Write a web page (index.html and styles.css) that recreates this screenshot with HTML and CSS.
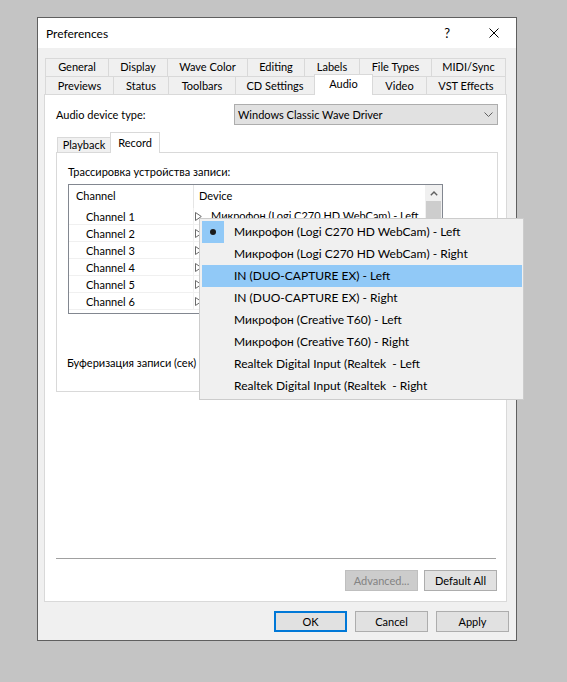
FILE: index.html
```html
<!DOCTYPE html>
<html>
<head>
<meta charset="utf-8">
<link rel="stylesheet" href="styles.css">
</head>
<body>
<div class="screen">
  <div class="dialog">
    <div class="titlebar">
      <span class="title">Preferences</span>
      <span class="help">?</span>
      <svg class="close" width="10" height="10" viewBox="0 0 10 10"><path d="M0.5 0.5 L9.5 9.5 M9.5 0.5 L0.5 9.5" stroke="#000" stroke-width="1" fill="none"/></svg>
    </div>
    <div class="body">
      <div class="tabs">
        <div class="tabrow top">
          <div class="tab w-general">General</div>
          <div class="tab w-display">Display</div>
          <div class="tab w-wave">Wave Color</div>
          <div class="tab w-editing">Editing</div>
          <div class="tab w-labels">Labels</div>
          <div class="tab w-filetypes">File Types</div>
          <div class="tab w-midi">MIDI/Sync</div>
        </div>
        <div class="tabrow">
          <div class="tab w-previews">Previews</div>
          <div class="tab w-status">Status</div>
          <div class="tab w-toolbars">Toolbars</div>
          <div class="tab w-cd">CD Settings</div>
          <div class="tab active w-audio">Audio</div>
          <div class="tab w-video">Video</div>
          <div class="tab w-vst">VST Effects</div>
        </div>
      </div>
      <div class="panel">
        <div class="device-row">
          <span class="device-label">Audio device type:</span>
          <div class="combo">
            <span>Windows Classic Wave Driver</span>
            <svg width="9" height="5" viewBox="0 0 9 5"><path d="M0.5 0.5 L4.5 4.5 L8.5 0.5" stroke="#606060" stroke-width="1" fill="none"/></svg>
          </div>
        </div>
        <div class="subtabs">
          <div class="subtab">Playback</div>
          <div class="subtab active">Record</div>
        </div>
        <div class="subpanel">
          <div class="sub-label">Трассировка устройства записи:</div>
          <div class="list">
            <div class="list-main">
              <div class="list-header">
                <div class="hcell hchannel">Channel</div>
                <div class="hcell hdevice">Device</div>
              </div>
              <div class="row"><div class="cell cchannel">Channel 1</div><div class="cell cdevice"><svg class="tri" width="7" height="9" viewBox="0 0 7 9"><path d="M0.5 0.5 L6.3 4.5 L0.5 8.5 Z" stroke="#6a6a6a" stroke-width="1" fill="#fff"/></svg><span class="dtext">Микрофон (Logi C270 HD WebCam) - Left</span></div></div>
              <div class="row"><div class="cell cchannel">Channel 2</div><div class="cell cdevice"><svg class="tri" width="7" height="9" viewBox="0 0 7 9"><path d="M0.5 0.5 L6.3 4.5 L0.5 8.5 Z" stroke="#6a6a6a" stroke-width="1" fill="#fff"/></svg></div></div>
              <div class="row"><div class="cell cchannel">Channel 3</div><div class="cell cdevice"><svg class="tri" width="7" height="9" viewBox="0 0 7 9"><path d="M0.5 0.5 L6.3 4.5 L0.5 8.5 Z" stroke="#6a6a6a" stroke-width="1" fill="#fff"/></svg></div></div>
              <div class="row"><div class="cell cchannel">Channel 4</div><div class="cell cdevice"><svg class="tri" width="7" height="9" viewBox="0 0 7 9"><path d="M0.5 0.5 L6.3 4.5 L0.5 8.5 Z" stroke="#6a6a6a" stroke-width="1" fill="#fff"/></svg></div></div>
              <div class="row"><div class="cell cchannel">Channel 5</div><div class="cell cdevice"><svg class="tri" width="7" height="9" viewBox="0 0 7 9"><path d="M0.5 0.5 L6.3 4.5 L0.5 8.5 Z" stroke="#6a6a6a" stroke-width="1" fill="#fff"/></svg></div></div>
              <div class="row"><div class="cell cchannel">Channel 6</div><div class="cell cdevice"><svg class="tri" width="7" height="9" viewBox="0 0 7 9"><path d="M0.5 0.5 L6.3 4.5 L0.5 8.5 Z" stroke="#6a6a6a" stroke-width="1" fill="#fff"/></svg></div></div>
            </div>
            <div class="scrollbar">
              <div class="sb-up"><svg width="8" height="5" viewBox="0 0 8 5"><path d="M0.8 4.2 L4 1 L7.2 4.2" stroke="#606060" stroke-width="1.4" fill="none"/></svg></div>
              <div class="sb-thumb"></div>
            </div>
          </div>
          <div class="buffer-label">Буферизация записи (сек)</div>
        </div>
        <div class="separator"></div>
        <div class="panel-buttons">
          <div class="btn disabled">Advanced...</div>
          <div class="btn">Default All</div>
        </div>
      </div>
      <div class="dialog-buttons">
        <div class="btn default">OK</div>
        <div class="btn">Cancel</div>
        <div class="btn">Apply</div>
      </div>
    </div>
    <div class="menu">
      <div class="item"><div class="check on"><span class="dot"></span></div><span class="itext">Микрофон (Logi C270 HD WebCam) - Left</span></div>
      <div class="item"><div class="check"></div><span class="itext">Микрофон (Logi C270 HD WebCam) - Right</span></div>
      <div class="item hl"><div class="check"></div><span class="itext">IN (DUO-CAPTURE EX) - Left</span></div>
      <div class="item"><div class="check"></div><span class="itext">IN (DUO-CAPTURE EX) - Right</span></div>
      <div class="item"><div class="check"></div><span class="itext">Микрофон (Creative T60) - Left</span></div>
      <div class="item"><div class="check"></div><span class="itext">Микрофон (Creative T60) - Right</span></div>
      <div class="item"><div class="check"></div><span class="itext">Realtek Digital Input (Realtek&nbsp; - Left</span></div>
      <div class="item"><div class="check"></div><span class="itext">Realtek Digital Input (Realtek&nbsp; - Right</span></div>
    </div>
  </div>
</div>
</body>
</html>
```
FILE: styles.css
```css
* { box-sizing: border-box; }
html, body { margin: 0; padding: 0; }
body {
  background: #c4c4c4;
  font-family: Lato, "Noto Sans", sans-serif;
  font-size: 11px;
  color: #000;
}
.screen { padding: 17px 0 0 37px; }
.dialog {
  position: relative;
  width: 480px;
  height: 624px;
  border: 1px solid #5f5f5f;
  background: #f0f0f0;
  display: flex;
  flex-direction: column;
}
.titlebar {
  height: 30px;
  flex: none;
  background: #fff;
  display: flex;
  align-items: center;
  padding-left: 8px;
  font-size: 12px;
}
.title { flex: 1; }
.help { font-size: 13px; margin-right: 39px; }
.close { margin-right: 17px; display: block; }

.body {
  flex: 1;
  padding: 10px 7px 0 6px;
  display: flex;
  flex-direction: column;
}
.tabs { margin-left: 1px; }
.tabrow { display: flex; align-items: flex-start; height: 18px; }
.tab {
  height: 18px;
  border: 1px solid #d9d9d9;
  border-bottom: none;
  margin-right: -1px;
  background: #f0f0f0;
  text-align: center;
  line-height: 17px;
  white-space: nowrap;
}
.tabrow.top .tab { line-height: 16px; }
.tab.active {
  position: relative;
  z-index: 1;
  background: #fff;
  height: 21px;
  margin-top: -2px;
  line-height: 17px;
}
.w-general { width: 64px; }
.w-display { width: 60px; }
.w-wave { width: 81px; }
.w-editing { width: 58px; }
.w-labels { width: 56px; }
.w-filetypes { width: 73px; }
.w-midi { width: 75px; }
.w-previews { width: 69px; }
.w-status { width: 56px; }
.w-toolbars { width: 68px; }
.w-cd { width: 80px; }
.w-audio { width: 59px; }
.w-video { width: 55px; }
.w-vst { width: 80px; }

.panel {
  width: 463px;
  height: 508px;
  flex: none;
  border: 1px solid #d9d9d9;
  background: #fff;
}
.device-row {
  display: flex;
  align-items: center;
  margin-top: 9px;
  padding-left: 11px;
  padding-right: 8px;
}
.device-label { flex: 1; }
.combo {
  width: 264px;
  height: 21px;
  border: 1px solid #adadad;
  background: #e1e1e1;
  display: flex;
  align-items: center;
  justify-content: space-between;
  padding: 0 4px 0 3px;
}
.combo svg { display: block; }

.subtabs {
  display: flex;
  align-items: flex-start;
  height: 20px;
  margin-top: 7px;
  margin-left: 12px;
}
.subtab {
  width: 53px;
  height: 15px;
  margin-top: 5px;
  border-left: 1px solid #d9d9d9;
  border-top: 1px solid #d9d9d9;
  background: #f0f0f0;
  text-align: center;
  line-height: 14px;
}
.subtab.active {
  position: relative;
  z-index: 1;
  width: 50px;
  height: 21px;
  margin-top: 0;
  border-right: 1px solid #d9d9d9;
  background: #fff;
  padding-top: 1px;
  line-height: 17px;
}
.subpanel {
  width: 442px;
  height: 240px;
  margin-left: 11px;
  border: 1px solid #d9d9d9;
  background: #fff;
}
.sub-label {
  margin: 11px 0 0 11px;
  line-height: 16px;
}
.list {
  width: 375px;
  height: 130px;
  margin: 4px 0 0 11px;
  border: 1px solid #828790;
  display: flex;
  overflow: hidden;
}
.list-main { flex: 1; }
.list-header { display: flex; height: 23px; }
.hcell { line-height: 22px; }
.hchannel {
  width: 125px;
  padding-left: 7px;
  border-right: 1px solid #e5e5e5;
}
.hdevice { padding-left: 5px; }
.row {
  display: flex;
  height: 17px;
  border-bottom: 1px solid #f0f0f0;
}
.cell { line-height: 16px; white-space: nowrap; }
.cchannel {
  width: 125px;
  padding-left: 17px;
  padding-top: 1px;
  line-height: 15px;
  border-right: 1px solid #f0f0f0;
}
.cdevice {
  display: flex;
  align-items: center;
  padding-left: 1px;
}
.tri { display: block; flex: none; }
.dtext { margin-left: 9px; }
.scrollbar {
  width: 17px;
  flex: none;
  background: #f0f0f0;
}
.sb-up {
  height: 16px;
  display: flex;
  align-items: center;
  justify-content: center;
}
.sb-up svg { display: block; }
.sb-thumb {
  width: 15px;
  height: 80px;
  margin-left: 1px;
  background: #cdcdcd;
}
.buffer-label {
  margin: 41px 0 0 10px;
  line-height: 16px;
}
.separator {
  width: 440px;
  height: 1px;
  margin: 166px 0 0 11px;
  background: #a0a0a0;
}
.panel-buttons {
  display: flex;
  justify-content: flex-end;
  gap: 6px;
  margin-top: 11px;
  padding-right: 9px;
}
.btn {
  width: 73px;
  height: 21px;
  border: 1px solid #adadad;
  background: #e1e1e1;
  text-align: center;
  line-height: 19px;
}
.btn.disabled {
  background: #cccccc;
  border-color: #bfbfbf;
  color: #838383;
}
.btn.default {
  border: 2px solid #0078d7;
  line-height: 17px;
}
.dialog-buttons {
  display: flex;
  justify-content: flex-end;
  gap: 8px;
  margin-top: 9px;
}

.menu {
  position: absolute;
  z-index: 5;
  left: 161px;
  top: 200px;
  width: 325px;
  height: 182px;
  border: 1px solid #cccccc;
  background: #f0f0f0;
  padding: 2px 1px 2px 2px;
  font-size: 12px;
}
.item {
  height: 22px;
  display: flex;
  align-items: center;
  white-space: nowrap;
}
.item.hl { background: #91c9f7; }
.check {
  width: 22px;
  height: 22px;
  flex: none;
  display: flex;
  align-items: center;
  justify-content: center;
}
.check.on { background: #91c9f7; }
.dot {
  width: 6px;
  height: 6px;
  border-radius: 50%;
  background: #1a1a1a;
}
.itext { margin-left: 10px; padding-bottom: 2px; }
```
